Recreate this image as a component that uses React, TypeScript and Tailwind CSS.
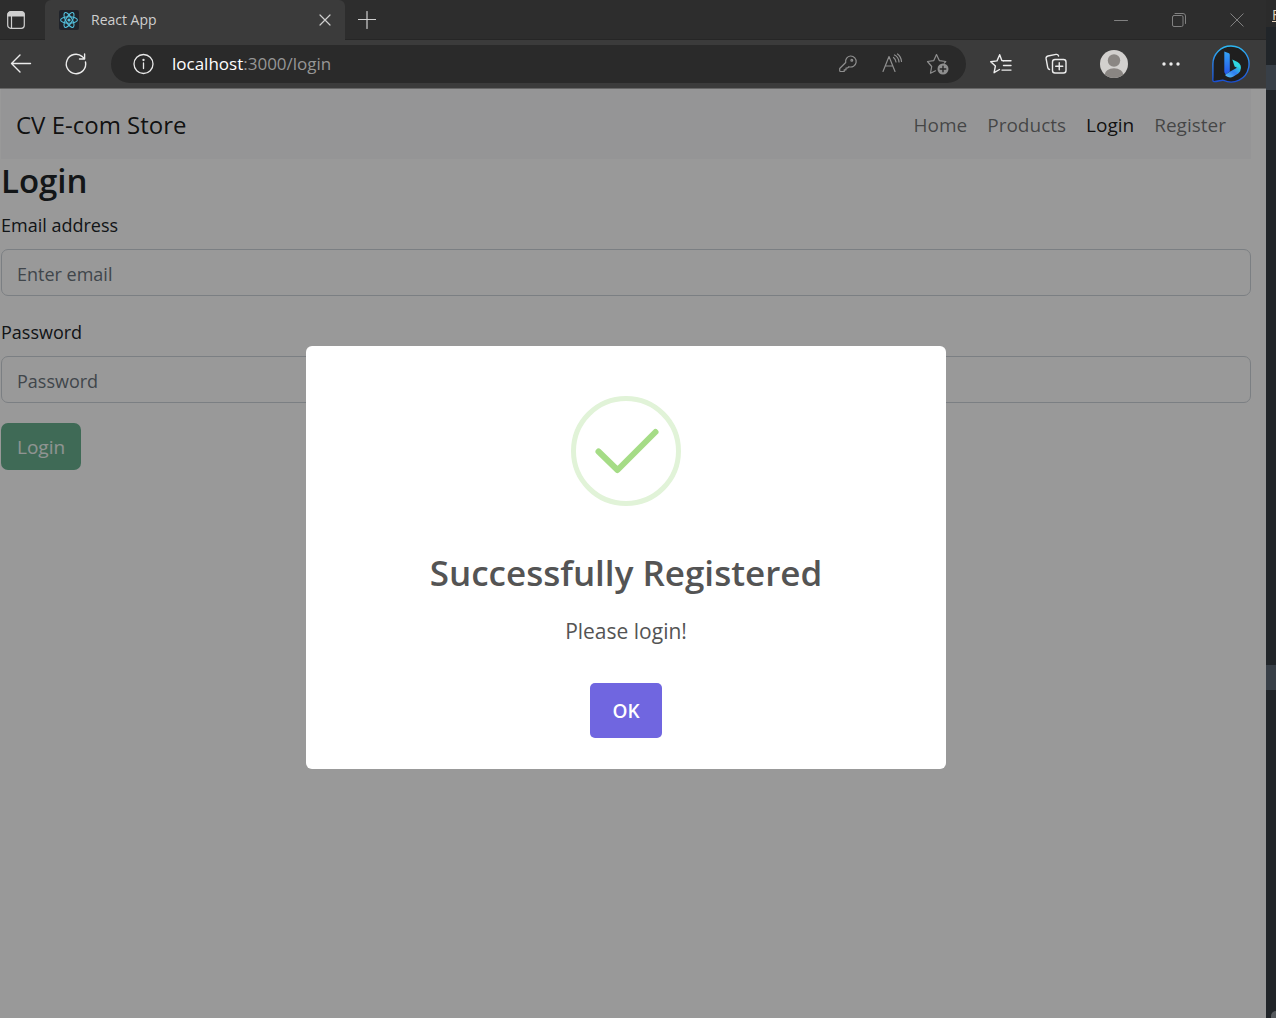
import React from "react";

const stroke = {
  fill: "none",
  stroke: "currentColor",
  strokeLinecap: "round" as const,
  strokeLinejoin: "round" as const,
};

function TabActionsIcon() {
  return (
    <svg width="18" height="18" viewBox="0 0 18 18" {...stroke} strokeWidth="1.2">
      <rect x="0.7" y="0.7" width="16.6" height="16.6" rx="3" />
      <path d="M1 3.5Q1 1 3.5 1h11Q17 1 17 3.5V5H1z" fill="currentColor" />
      <path d="M4.5 5v12" />
    </svg>
  );
}

function ReactLogo() {
  return (
    <svg width="20" height="20" viewBox="0 0 20 20" fill="none" stroke="#53c1de" strokeWidth="1.1">
      <rect width="20" height="20" rx="2" fill="#20232a" stroke="none" />
      <ellipse cx="10" cy="10" rx="8.4" ry="3.2" />
      <ellipse cx="10" cy="10" rx="8.4" ry="3.2" transform="rotate(60 10 10)" />
      <ellipse cx="10" cy="10" rx="8.4" ry="3.2" transform="rotate(120 10 10)" />
      <circle cx="10" cy="10" r="1.6" fill="#53c1de" stroke="none" />
    </svg>
  );
}

function BingLogo() {
  return (
    <svg width="38" height="40" viewBox="0 0 38 40">
      <defs>
        <linearGradient id="ring" x1="0" y1="0" x2="0" y2="1">
          <stop offset="0" stopColor="#2cb8f2" />
          <stop offset="0.5" stopColor="#2b7de9" />
          <stop offset="1" stopColor="#1a4fd0" />
        </linearGradient>
        <linearGradient id="stem" x1="0" y1="0" x2="0" y2="1">
          <stop offset="0" stopColor="#35a4f5" />
          <stop offset="1" stopColor="#2456e8" />
        </linearGradient>
        <linearGradient id="bowl" x1="0" y1="1" x2="1" y2="0">
          <stop offset="0" stopColor="#5cc8f5" />
          <stop offset="0.5" stopColor="#2f7df0" />
          <stop offset="1" stopColor="#2fe0d8" />
        </linearGradient>
      </defs>
      <path
        d="M19 2a18 18 0 1 1-7.4 34.4c-2-.8-5.2 1.2-9.6 1.2C.6 37.6.7 36 .9 33.5V20A18 18 0 0 1 19 2z"
        fill="#1f1f1f"
        stroke="url(#ring)"
        strokeWidth="1.4"
      />
      <path d="M12.3 7.5l4 1.5c1 .4 1.500 1 1.500 2v16.500L14 30.500c-1.300-1-1.700-2-1.700-3.500z" fill="url(#stem)" />
      <path d="M20.300 15.500l5.200 2.500c3 1.600 4 4.500 3.100 7.500l-6-3z" fill="#2fd8e0" />
      <path d="M23 21.500l5 2.500c1.300 2.500-.2 4.500-2.500 6l-4.500 2.800c-2.500 1.500-6 .5-8-1.800l4.800-3.300 7.200-4z" fill="url(#bowl)" />
    </svg>
  );
}

function TitleBar() {
  return (
    <div className="flex h-10 items-center border-b border-[#262626] bg-[#2d2d2d] text-[#cfcfcf]">
      <button aria-label="Tab actions" className="flex w-[45px] pl-[7px]">
        <TabActionsIcon />
      </button>
      <div className="-mb-px flex h-10 w-[300px] items-center rounded-t-md bg-[#3b3b3b] pr-3 pl-[14px]">
        <ReactLogo />
        <span className="ml-3 flex-1 pb-0.5 text-[14px]">React App</span>
        <button aria-label="Close tab" className="p-0.5">
          <svg width="12" height="12" viewBox="0 0 12 12" {...stroke} strokeWidth="1.2">
            <path d="M1 1l10 10M11 1L1 11" />
          </svg>
        </button>
      </div>
      <button aria-label="New tab" className="ml-3 p-px">
        <svg width="18" height="18" viewBox="0 0 18 18" {...stroke} strokeWidth="1.2">
          <path d="M.5 8.500h17M9 .5v17" />
        </svg>
      </button>
      <div className="ml-auto flex items-center gap-11 pr-[22px] text-[#818181]">
        <button aria-label="Minimize">
          <svg width="14" height="14" viewBox="0 0 14 14" {...stroke}>
            <path d="M.5 7.500h13" />
          </svg>
        </button>
        <button aria-label="Restore">
          <svg width="14" height="14" viewBox="0 0 14 14" {...stroke}>
            <rect x="0.5" y="2.5" width="10.5" height="11" rx="1.5" />
            <path d="M3 .5h8q2.500 0 2.500 2.500v7.500" />
          </svg>
        </button>
        <button aria-label="Close">
          <svg width="14" height="14" viewBox="0 0 14 14" {...stroke}>
            <path d="M.8.800l12.400 12.400M13.200.800L.8 13.200" />
          </svg>
        </button>
      </div>
    </div>
  );
}

function AddressBar() {
  return (
    <div className="ml-[23px] flex h-[38px] min-w-0 flex-1 items-center rounded-full bg-[#2a2a2a] pr-4 pl-[22px] text-[#8f8f8f]">
      <button aria-label="Site information" className="text-[#e8e8e8]">
        <svg width="22" height="22" viewBox="0 0 22 22" {...stroke} strokeWidth="1.3">
          <circle cx="10.5" cy="11" r="9.500" />
          <path d="M10.500 10v5.500" />
          <circle cx="10.5" cy="7" r="0.5" fill="currentColor" />
        </svg>
      </button>
      <a href="#login" className="ml-[17px] flex-1 truncate text-[17px] text-[#969696]">
        <span className="text-white">localhost</span>:3000/login
      </a>
      <div className="flex items-center gap-[23px]">
        <button aria-label="Saved passwords">
          <svg width="20" height="20" viewBox="0 0 20 20" {...stroke} strokeWidth="1.2">
            <path d="M12.500 2a5.500 5.500 0 1 1-1.600 10.700L9.500 14H8v1.800H6.200v1.700H2.500q-.8 0-.8-.8v-2.200l6-6A5.500 5.500 0 0 1 12.500 2z" />
            <circle cx="13.8" cy="6.2" r="0.9" />
          </svg>
        </button>
        <button aria-label="Read aloud">
          <svg width="22" height="22" viewBox="0 0 22 22" {...stroke} strokeWidth="1.2">
            <path d="M2 18.500L8 3.500l6 15M4.200 13h7.600M12.500 4.500q2 1.500 2.500 4.500M13.500 2q4 2 4.500 7M16.500 1q3.500 2.500 4 7.500" />
          </svg>
        </button>
        <button aria-label="Add to favorites">
          <svg width="24" height="24" viewBox="0 0 24 24" {...stroke} strokeWidth="1.2">
            <path d="M9.500 18.800l-5 2.400 1.200-6.700L1.500 9.500l6.300-.9L10.500 2.500l2.800 6.100 6.500.9-1.500 1.700" />
            <circle cx="17" cy="17" r="5.5" fill="currentColor" stroke="none" />
            <path d="M17 14.200v5.600M14.200 17h5.600" stroke="#2a2a2a" strokeWidth="1.4" />
          </svg>
        </button>
      </div>
    </div>
  );
}

function Toolbar() {
  return (
    <div className="flex h-12 items-center bg-[#3b3b3b] pr-4 pl-[10px] text-[#ececec]">
      <button aria-label="Back">
        <svg width="22" height="22" viewBox="0 0 22 22" {...stroke} strokeWidth="1.4">
          <path d="M20.500 10.500H1.500M10 2L1.500 10.500l8.500 8.500" />
        </svg>
      </button>
      <button aria-label="Refresh" className="ml-8">
        <svg width="24" height="24" viewBox="0 0 24 24" {...stroke} strokeWidth="1.4">
          <path d="M21.500 10A9.700 9.700 0 1 1 18.300 4.600L20.300 6.800M20.600 2v5H15.500" />
        </svg>
      </button>
      <AddressBar />
      <div className="ml-[22px] flex items-center gap-8">
        <button aria-label="Favorites">
          <svg width="24" height="24" viewBox="0 0 24 24" {...stroke} strokeWidth="1.4">
            <path d="M15.500 8.700L13.800 8.500 11.700 2.700 9 8.900l-6.300.8 4.700 4.300-1.300 6.700 5.400-3.200" />
            <path d="M15.500 8.700h7.500M15.500 13.500h7.500M14 18.100h9" />
          </svg>
        </button>
        <button aria-label="Collections">
          <svg width="24" height="24" viewBox="0 0 24 24" {...stroke} strokeWidth="1.4">
            <rect x="8.5" y="7.5" width="13.5" height="13.5" rx="2.5" />
            <path d="M15.250 10.700v7.100M11.700 14.250h7.100M5.500 17.500q-1.500-.6-1.800-2.200L2.100 6.700Q1.800 4.500 4 4l8-1.600q2-.3 2.600 1.600" />
          </svg>
        </button>
        <button aria-label="Profile">
          <svg width="28" height="28" viewBox="0 0 28 28">
            <clipPath id="avatar">
              <circle cx="14" cy="14" r="14" />
            </clipPath>
            <g clipPath="url(#avatar)">
              <rect width="28" height="28" fill="#d2d0ce" />
              <circle cx="14" cy="10.5" r="6.2" fill="#8a8683" />
              <ellipse cx="14" cy="25" rx="9.5" ry="6.8" fill="#8a8683" />
            </g>
          </svg>
        </button>
        <button aria-label="Settings and more">
          <svg width="20" height="20" viewBox="0 0 20 20" fill="currentColor">
            <circle cx="4" cy="10" r="1.7" />
            <circle cx="11" cy="10" r="1.7" />
            <circle cx="18" cy="10" r="1.7" />
          </svg>
        </button>
        <button aria-label="Discover">
          <BingLogo />
        </button>
      </div>
    </div>
  );
}

function Field({ id, label, type, placeholder }: { id: string; label: string; type: string; placeholder: string }) {
  return (
    <div className="mb-5">
      <label htmlFor={id} className="mb-2 block text-[18px] leading-8">
        {label}
      </label>
      <input
        id={id}
        type={type}
        placeholder={placeholder}
        className="block h-[47px] w-full rounded-[7px] border border-[#ced4da] bg-white px-[15px] pt-0.5 text-[18px] placeholder:text-[#6c757d]"
      />
    </div>
  );
}

const links = [
  { name: "Home", active: false },
  { name: "Products", active: false },
  { name: "Login", active: true },
  { name: "Register", active: false },
];

function LoginPage() {
  return (
    <div className="pr-[15px] pl-px text-[#212529]">
      <nav className="flex h-[70px] items-center justify-between bg-[#f8f9fa] pt-0.5 pr-[25px] pl-[15px]">
        <a href="#home" className="text-[24px] text-black/90">
          CV E-com Store
        </a>
        <div className="flex gap-5 text-[19px]">
          {links.map((link) => (
            <a key={link.name} href={"#" + link.name} className={link.active ? "text-black/90" : "text-black/55"}>
              {link.name}
            </a>
          ))}
        </div>
      </nav>
      <h1 className="mb-1.5 text-[33px] leading-[44px] font-semibold">Login</h1>
      <form>
        <Field id="email" label="Email address" type="email" placeholder="Enter email" />
        <Field id="password" label="Password" type="password" placeholder="Password" />
        <button type="button" className="h-[47px] rounded-[7px] bg-[#69b190] px-4 pt-0.5 text-[19px] text-white/90">
          Login
        </button>
      </form>
    </div>
  );
}

function SuccessDialog() {
  return (
    <div className="absolute inset-0 flex items-center justify-center bg-black/40 pt-2 pr-[15px] pl-px">
      <div
        role="dialog"
        aria-labelledby="dialog-title"
        className="flex w-[640px] flex-col items-center rounded-md bg-white pt-[50px] pb-[31px] text-[#545454]"
      >
        <svg width="110" height="110" viewBox="0 0 110 110" fill="none">
          <circle cx="55" cy="55" r="52.5" stroke="#e1f3d8" strokeWidth="5" />
          <path d="M27.500 55.500L46.500 74 84.500 36" stroke="#a5dc86" strokeWidth="6" strokeLinecap="round" strokeLinejoin="round" />
        </svg>
        <h2 id="dialog-title" className="mt-[45px] text-[35px] leading-[44px] font-semibold">
          Successfully Registered
        </h2>
        <p className="mt-[22px] text-[21px] leading-7">Please login!</p>
        <button className="mt-[38px] h-[55px] rounded-[5px] bg-[#7066e0] px-[22px] pt-0.5 text-[19px] font-semibold text-white">
          OK
        </button>
      </div>
    </div>
  );
}

function BackgroundEditor() {
  return (
    <aside className="flex w-[10px] shrink-0 flex-col overflow-hidden bg-[#212529]">
      <div className="h-[27px] bg-[#2b2b2b] pl-1.5 text-[14px] leading-[30px] text-[#e6d3bd] underline">F</div>
      <div className="mt-[38px] h-[25px] bg-[#383f47]" />
      <div className="mt-[575px] h-[25px] bg-[#383f47]" />
      <div className="mt-auto ml-[5px] h-[7px] rounded-tl-md bg-[#565a5e]" />
    </aside>
  );
}

export default function App() {
  return (
    <div className="flex min-h-screen font-['Open_Sans',sans-serif]">
      <div className="flex min-w-0 flex-1 flex-col">
        <header>
          <TitleBar />
          <Toolbar />
        </header>
        <main className="relative flex-1 border-t border-[#666666] bg-white">
          <LoginPage />
          <SuccessDialog />
        </main>
      </div>
      <BackgroundEditor />
    </div>
  );
}
